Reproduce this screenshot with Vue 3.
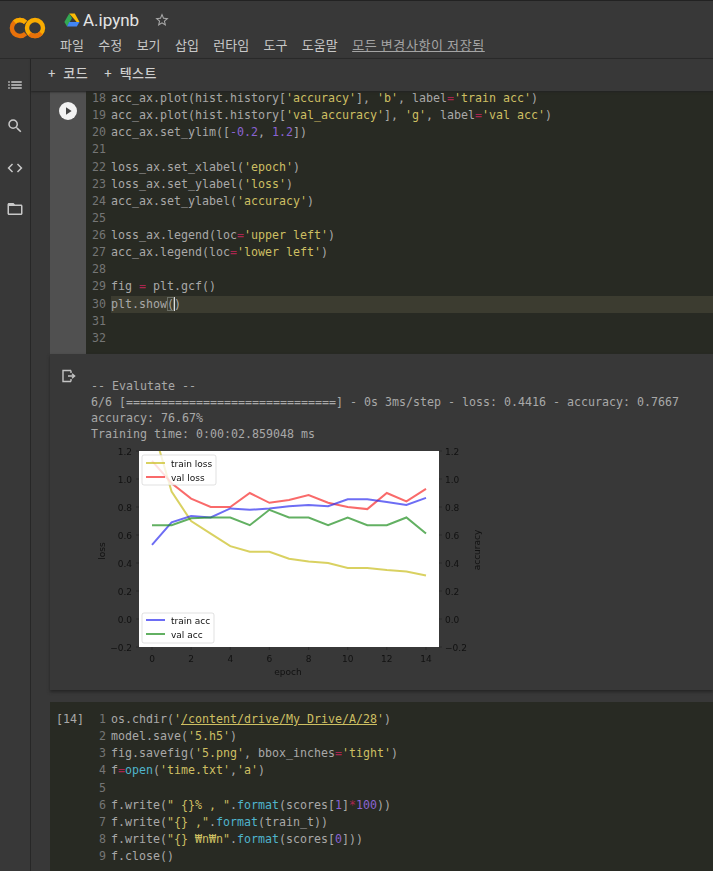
<script setup>
// token helpers: s = string, o = operator, n = number, b = builtin
const p = (t) => ({ t, c: '' })
const s = (t) => ({ t, c: 'str' })
const o = (t) => ({ t, c: 'op' })
const n = (t) => ({ t, c: 'num' })
const b = (t) => ({ t, c: 'fn' })
const u = (t) => ({ t, c: 'str link' })

const cell1 = [
  { no: 18, code: [p('acc_ax.plot(hist.history['), s("'accuracy'"), p('], '), s("'b'"), p(', label'), o('='), s("'train acc'"), p(')')] },
  { no: 19, code: [p('acc_ax.plot(hist.history['), s("'val_accuracy'"), p('], '), s("'g'"), p(', label'), o('='), s("'val acc'"), p(')')] },
  { no: 20, code: [p('acc_ax.set_ylim(['), n('-0.2'), p(', '), n('1.2'), p('])')] },
  { no: 21, code: [] },
  { no: 22, code: [p('loss_ax.set_xlabel('), s("'epoch'"), p(')')] },
  { no: 23, code: [p('loss_ax.set_ylabel('), s("'loss'"), p(')')] },
  { no: 24, code: [p('acc_ax.set_ylabel('), s("'accuracy'"), p(')')] },
  { no: 25, code: [] },
  { no: 26, code: [p('loss_ax.legend(loc'), o('='), s("'upper left'"), p(')')] },
  { no: 27, code: [p('acc_ax.legend(loc'), o('='), s("'lower left'"), p(')')] },
  { no: 28, code: [] },
  { no: 29, code: [p('fig '), o('='), p(' plt.gcf()')] },
  { no: 30, active: true, code: [p('plt.show'), { t: '(', c: 'cursor' }, p(')')] },
  { no: 31, code: [] },
  { no: 32, code: [] },
]

const cell2 = [
  { no: 1, code: [p('os.chdir('), s("'"), u('/content/drive/My Drive/A/28'), s("'"), p(')')] },
  { no: 2, code: [p('model.save('), s("'5.h5'"), p(')')] },
  { no: 3, code: [p('fig.savefig('), s("'5.png'"), p(', bbox_inches'), o('='), s("'tight'"), p(')')] },
  { no: 4, code: [p('f'), o('='), b('open'), p('('), s("'time.txt'"), p(','), s("'a'"), p(')')] },
  { no: 5, code: [] },
  { no: 6, code: [p('f.write('), s('" {}% , "'), p('.'), b('format'), p('(scores['), n('1'), p(']'), o('*'), n('100'), p('))')] },
  { no: 7, code: [p('f.write('), s('"{} ,"'), p('.'), b('format'), p('(train_t))')] },
  { no: 8, code: [p('f.write('), s('"{} ₩n₩n"'), p('.'), b('format'), p('(scores['), n('0'), p(']))')] },
  { no: 9, code: [p('f.close()')] },
]

const menus = ['파일', '수정', '보기', '삽입', '런타임', '도구', '도움말']

const outputText = `-- Evalutate --
6/6 [==============================] - 0s 3ms/step - loss: 0.4416 - accuracy: 0.7667
accuracy: 76.67%
Training time: 0:00:02.859048 ms`

// chart
const X = (i) => 62 + 19.57 * i
const Y = (v) => 11 + (1.2 - v) * 140
const line = (arr) => arr.map((v, i) => `${X(i).toFixed(1)},${Y(v).toFixed(1)}`).join(' ')

const series = [
  { color: '#c9bd1e', pts: line([1.39, 0.91, 0.70, 0.61, 0.52, 0.48, 0.48, 0.43, 0.41, 0.40, 0.365, 0.365, 0.35, 0.34, 0.31]) },
  { color: '#f62b2b', pts: line([1.13, 0.97, 0.86, 0.80, 0.80, 0.90, 0.83, 0.85, 0.885, 0.83, 0.80, 0.785, 0.90, 0.84, 0.93]) },
  { color: '#2f2ff0', pts: line([0.53, 0.69, 0.735, 0.725, 0.79, 0.78, 0.79, 0.805, 0.815, 0.805, 0.855, 0.855, 0.835, 0.815, 0.865]) },
  { color: '#1f8f1f', pts: line([0.67, 0.67, 0.72, 0.725, 0.725, 0.67, 0.78, 0.725, 0.725, 0.67, 0.725, 0.67, 0.67, 0.725, 0.61]) },
]

const yTicks = [1.2, 1.0, 0.8, 0.6, 0.4, 0.2, 0.0, -0.2]
const xTicks = [0, 2, 4, 6, 8, 10, 12, 14]
const fmt = (v) => (v < 0 ? '−' + Math.abs(v).toFixed(1) : v.toFixed(1))
</script>

<template>
  <div class="page">
    <header class="topbar">
      <div class="logo">
        <svg width="40" height="24" viewBox="0 0 40 24">
          <circle cx="27" cy="12" r="8" fill="none" stroke="#f9ab00" stroke-width="4.4" />
          <path d="M33 17 A8 8 0 0 1 21.5 18" fill="none" stroke="#e8710a" stroke-width="4.4" />
          <path d="M17.6 6.4 A8 8 0 1 0 17.6 17.6" fill="none" stroke="#e8710a" stroke-width="4.4" />
          <path d="M6.5 6 A8 8 0 0 1 17.6 6.4" fill="none" stroke="#f9ab00" stroke-width="4.4" />
        </svg>
      </div>
      <div class="titles">
        <div class="title-row">
          <svg class="drive" width="16" height="14" viewBox="0 0 16 14">
            <polygon points="5.2,0.5 10.8,0.5 15.5,9 12.7,9" fill="#fbbc04" />
            <polygon points="5.2,0.5 8,5.2 3,13.5 0.4,9" fill="#34a853" />
            <polygon points="5.2,9 15.5,9 12.8,13.5 3,13.5" fill="#4285f4" />
          </svg>
          <span class="name">A.ipynb</span>
          <svg class="star" width="16" height="16" viewBox="0 0 24 24">
            <path d="M22 9.24l-7.19-.62L12 2 9.19 8.63 2 9.24l5.46 4.73L5.82 21 12 17.27 18.18 21l-1.63-7.03L22 9.24zM12 15.4l-3.76 2.27 1-4.28-3.32-2.88 4.38-.38L12 6.1l1.71 4.04 4.38.38-3.32 2.88 1 4.28L12 15.4z" fill="#a8a8a8" />
          </svg>
        </div>
        <nav class="menu">
          <span v-for="m in menus" :key="m">{{ m }}</span>
          <a class="saved">모든 변경사항이 저장됨</a>
        </nav>
      </div>
    </header>

    <div class="body">
      <aside class="sidebar">
        <svg width="18" height="18" viewBox="0 0 24 24"><path d="M3 13h2v-2H3v2zm0 4h2v-2H3v2zm0-8h2V7H3v2zm4 4h14v-2H7v2zm0 4h14v-2H7v2zM7 7v2h14V7H7z" fill="#c8c8c8" /></svg>
        <svg width="18" height="18" viewBox="0 0 24 24"><path d="M15.5 14h-.79l-.28-.27A6.47 6.47 0 0 0 16 9.5 6.5 6.5 0 1 0 9.5 16c1.61 0 3.09-.59 4.23-1.57l.27.28v.79l5 4.99L20.49 19l-4.99-5zm-6 0C7.01 14 5 11.99 5 9.5S7.01 5 9.5 5 14 7.01 14 9.5 11.99 14 9.5 14z" fill="#c8c8c8" /></svg>
        <svg width="18" height="18" viewBox="0 0 24 24"><path d="M9.4 16.6L4.8 12l4.6-4.6L8 6l-6 6 6 6 1.4-1.4zm5.2 0l4.6-4.6-4.6-4.6L16 6l6 6-6 6-1.4-1.4z" fill="#c8c8c8" /></svg>
        <svg width="18" height="18" viewBox="0 0 24 24"><path d="M20 6h-8l-2-2H4c-1.1 0-1.99.9-1.99 2L2 18c0 1.1.9 2 2 2h16c1.1 0 2-.9 2-2V8c0-1.1-.9-2-2-2zm0 12H4V8h16v10z" fill="#c8c8c8" /></svg>
      </aside>

      <main class="main">
        <div class="toolbar">
          <span class="tool"><i>+</i> 코드</span>
          <span class="tool"><i>+</i> 텍스트</span>
        </div>

        <div class="notebook">
          <section class="cell first">
            <div class="gutter">
              <div class="play">
                <svg width="18" height="18" viewBox="0 0 18 18"><circle cx="9" cy="9" r="9" fill="#f2f2f2" /><polygon points="7,5.3 12.6,9 7,12.7" fill="#444" /></svg>
              </div>
            </div>
            <div class="code scrolled">
              <div v-for="l in cell1" :key="l.no" class="line" :class="{ active: l.active }">
                <span class="no">{{ l.no }}</span>
                <span class="src"><span v-for="(k, i) in l.code" :key="i" :class="k.c">{{ k.t }}</span></span>
              </div>
            </div>
          </section>

          <section class="output">
            <div class="out-icon">
              <svg width="16" height="14" viewBox="0 0 16 14">
                <path d="M10 1.5H2v11h8M10 1.5v2.500M10 12.500v-2.500" fill="none" stroke="#c4c4c4" stroke-width="1.4" />
                <path d="M7 7h6M11 4.800 13.600 7 11 9.200" fill="none" stroke="#c4c4c4" stroke-width="1.4" />
              </svg>
            </div>
            <div class="out-body">
              <pre class="out-text">{{ outputText }}</pre>
              <svg class="chart" width="400" height="250" viewBox="0 0 400 250">
                <rect x="49" y="11" width="300" height="196" fill="#fff" />
                <clipPath id="plot"><rect x="49" y="11" width="300" height="196" /></clipPath>
                <g clip-path="url(#plot)">
                  <polyline v-for="l in series" :key="l.color" :points="l.pts" fill="none" :stroke="l.color" stroke-width="2" stroke-opacity="0.7" />
                </g>
                <g class="legend">
                  <rect x="52" y="15" width="74" height="30" rx="2" fill="#fff" fill-opacity="0.8" stroke="#ccc" stroke-width="0.6" />
                  <line x1="56" y1="23" x2="75" y2="23" stroke="#c9bd1e" stroke-width="2" stroke-opacity="0.7" />
                  <line x1="56" y1="37" x2="75" y2="37" stroke="#f62b2b" stroke-width="2" stroke-opacity="0.7" />
                  <text x="81" y="27">train loss</text>
                  <text x="81" y="41">val loss</text>
                  <rect x="52" y="173" width="72" height="30" rx="2" fill="#fff" fill-opacity="0.8" stroke="#ccc" stroke-width="0.6" />
                  <line x1="56" y1="180" x2="75" y2="180" stroke="#2f2ff0" stroke-width="2" stroke-opacity="0.7" />
                  <line x1="56" y1="194" x2="75" y2="194" stroke="#1f8f1f" stroke-width="2" stroke-opacity="0.7" />
                  <text x="81" y="184">train acc</text>
                  <text x="81" y="198">val acc</text>
                </g>
                <g class="ticks">
                  <g v-for="v in yTicks" :key="v">
                    <line x1="46" x2="49" :y1="Y(v)" :y2="Y(v)" stroke="#222" stroke-width="0.6" />
                    <line x1="349" x2="352" :y1="Y(v)" :y2="Y(v)" stroke="#222" stroke-width="0.6" />
                    <text x="42" :y="Y(v) + 3.500" text-anchor="end">{{ fmt(v) }}</text>
                    <text x="355" :y="Y(v) + 3.500">{{ fmt(v) }}</text>
                  </g>
                  <g v-for="v in xTicks" :key="v">
                    <line :x1="X(v)" :x2="X(v)" y1="207" y2="210" stroke="#222" stroke-width="0.6" />
                    <text :x="X(v)" y="222" text-anchor="middle">{{ v }}</text>
                  </g>
                  <text x="198" y="235" text-anchor="middle">epoch</text>
                  <text transform="translate(15 111) rotate(-90)" text-anchor="middle">loss</text>
                  <text transform="translate(390 110) rotate(-90)" text-anchor="middle">accuracy</text>
                </g>
              </svg>
            </div>
          </section>

          <section class="cell second">
            <div class="gutter dark"><span class="count">[14]</span></div>
            <div class="code">
              <div v-for="l in cell2" :key="l.no" class="line">
                <span class="no">{{ l.no }}</span>
                <span class="src"><span v-for="(k, i) in l.code" :key="i" :class="k.c">{{ k.t }}</span></span>
              </div>
            </div>
          </section>
        </div>
      </main>
    </div>
  </div>
</template>

<style>
html, body { margin: 0; background: #383838; }
</style>

<style scoped>
.page {
  width: 713px;
  height: 871px;
  overflow: hidden;
  display: flex;
  flex-direction: column;
  background: #383838;
  color: #c8c8c8;
  font-family: "Noto Sans CJK KR", "Noto Sans", sans-serif;
}

.topbar {
  height: 59px;
  flex: none;
  display: flex;
  box-sizing: border-box;
  border-top: 1px solid #222;
  border-bottom: 1px solid #2a2a2a;
}
.logo {
  width: 60px;
  flex: none;
  padding: 15px 0 0 8px;
  box-sizing: border-box;
}
.titles { display: flex; flex-direction: column; }
.title-row {
  display: flex;
  align-items: center;
  height: 30px;
  padding: 7px 0 0 4px;
  box-sizing: border-box;
}
.name {
  font-family: Roboto, sans-serif;
  font-size: 17px;
  color: #e4e4e4;
  margin-left: 3px;
}
.star { margin-left: 15px; }
.menu {
  display: flex;
  gap: 14.4px;
  font-size: 13px;
  line-height: 24px;
  margin-top: 2px;
  white-space: nowrap;
}
.saved {
  color: #a4a4a4;
  text-decoration: underline;
  letter-spacing: 0.6px;
}

.body { flex: 1; display: flex; min-height: 0; }

.sidebar {
  width: 31px;
  flex: none;
  box-sizing: border-box;
  border-right: 1px solid #272727;
  display: flex;
  flex-direction: column;
  align-items: center;
  gap: 23.4px;
  padding-top: 17px;
}

.main { flex: 1; min-width: 0; display: flex; flex-direction: column; }

.toolbar {
  height: 32px;
  flex: none;
  box-sizing: border-box;
  display: flex;
  align-items: center;
  gap: 16px;
  padding: 0 0 5px 17px;
  font-size: 13px;
  font-weight: 500;
  letter-spacing: 0.5px;
  color: #cfcfcf;
  box-shadow: 0 1px 2px #222;
  position: relative;
  z-index: 1;
}
.tool i { font-style: normal; margin-right: 4px; }

.notebook { flex: 1; padding-left: 19px; min-height: 0; overflow: hidden; }

.cell { display: flex; background: #282a23; }
.cell.first { height: 263px; overflow: hidden; }
.cell.second { margin-top: 12px; height: 170px; }

.gutter { width: 36px; flex: none; background: #505050; position: relative; }
.gutter.dark { background: transparent; }
.play { position: absolute; left: 9px; top: 10px; height: 18px; }
.count {
  position: absolute;
  left: 6px;
  top: 9px;
  font: 11.64px/17px "DejaVu Sans Mono", monospace;
  color: #a8a8a8;
}

.code { flex: 1; min-width: 0; padding-top: 9px; }
.code.scrolled { padding-top: 0; margin-top: -1px; }

.line {
  display: flex;
  height: 17.14px;
  line-height: 17px;
  font-family: "DejaVu Sans Mono", monospace;
  font-size: 11.64px;
  white-space: pre;
  color: #a8a8a8;
}
.no { width: 20px; flex: none; text-align: right; color: #757575; margin-right: 5px; }
.src { flex: 1; min-width: 0; }
.line.active .src { background: #3c3c30; }

.str { color: #cdbf62; }
.op { color: #a8264f; }
.num { color: #8a63d2; }
.fn { color: #4fb4cc; }
.link { text-decoration: underline; }
.cursor { box-shadow: inset 0 0 0 1px #6b6f66; border-right: 1px solid #ddd; margin-right: -1px; }

.output {
  display: flex;
  height: 336px;
  box-sizing: border-box;
  background: #383838;
  box-shadow: 0 2px 3px #252525;
  position: relative;
  padding-top: 1px;
}
.out-icon { width: 41px; flex: none; padding: 9px 0 0 11px; box-sizing: border-box; }
.out-body { flex: 1; min-width: 0; padding-top: 23px; }
.out-text {
  margin: 0;
  font-family: "DejaVu Sans Mono", monospace;
  font-size: 11.64px;
  line-height: 16px;
  color: #a8a8a8;
  height: 64px;
}
.chart { display: block; margin: -2px 0 0 -1px; filter: blur(0.45px); }
.chart text {
  font-family: "DejaVu Sans", sans-serif;
  font-size: 9px;
  fill: #111;
}
</style>
